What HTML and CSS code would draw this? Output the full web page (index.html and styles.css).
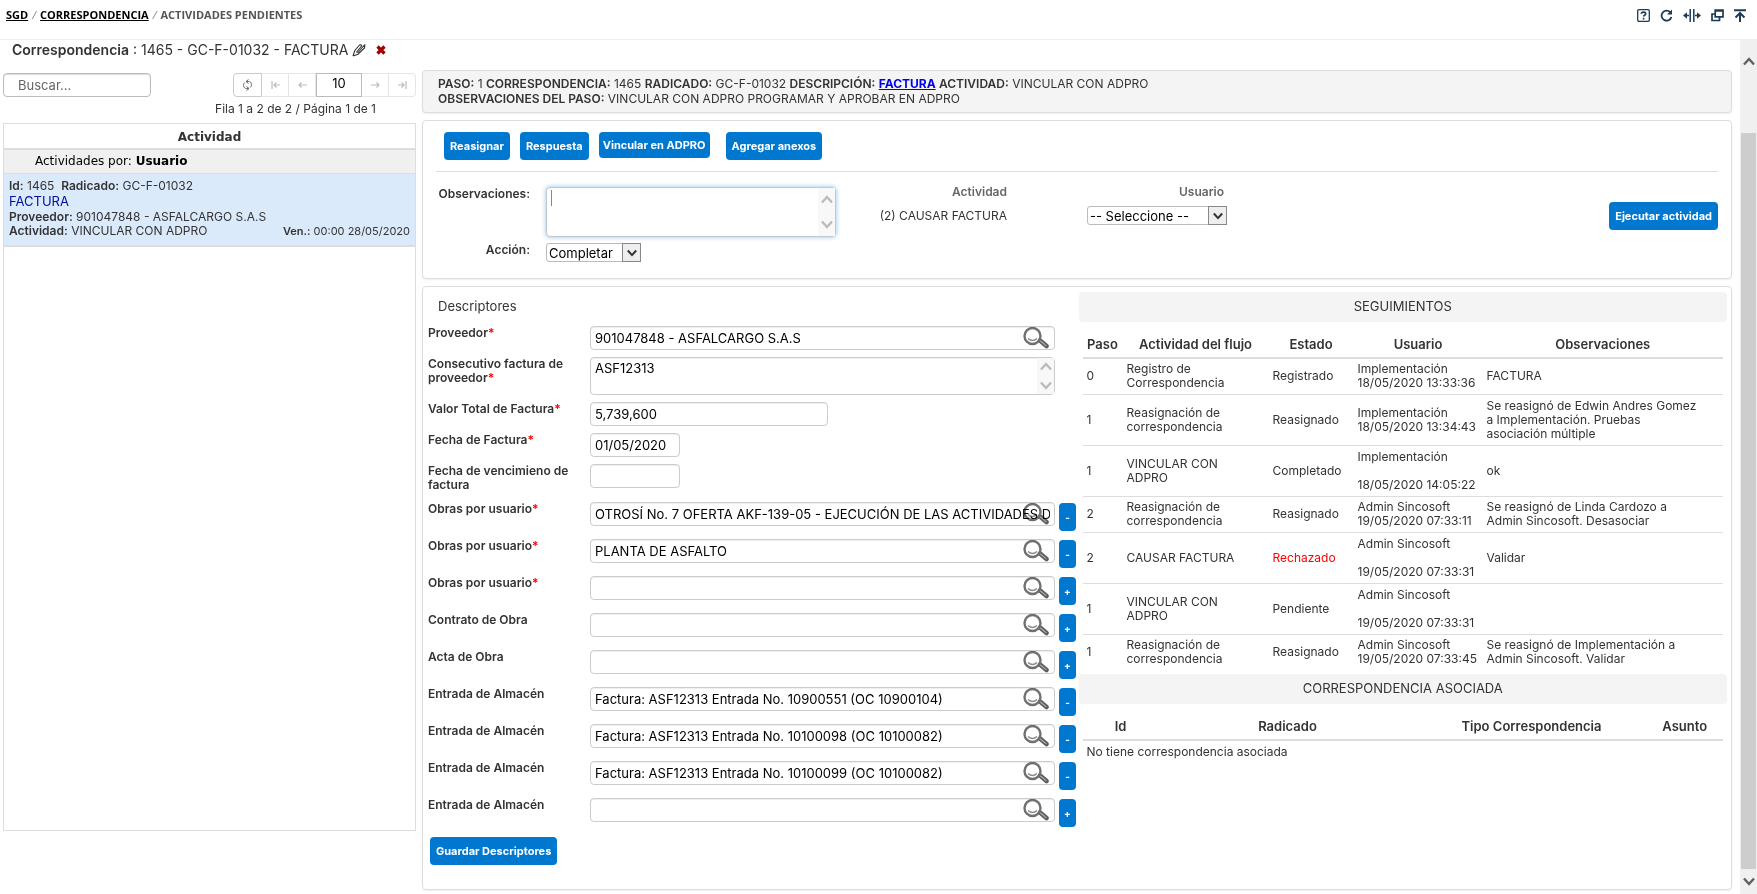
FILE: index.html
```html
<!DOCTYPE html>
<html lang="es">
<head>
<meta charset="utf-8">
<title>Actividades pendientes</title>
<link rel="stylesheet" href="styles.css">
</head>
<body>
<svg width="0" height="0" class="defs" aria-hidden="true">
  <symbol id="lens" viewBox="0 0 26 22">
    <path d="M17 13.500l6.500 5.500" stroke="#5c5c5c" stroke-width="4.500" stroke-linecap="round"/>
    <path d="M17.500 14l5.500 4.600" stroke="#b0b0b0" stroke-width="1.200" stroke-linecap="round"/>
    <circle cx="9.500" cy="9" r="8" fill="none" stroke="#707070" stroke-width="2.400"/>
    <path d="M5 11.500q4.500 4 9 0" fill="none" stroke="#8a8a8a" stroke-width="1.400"/>
  </symbol>
  <symbol id="up" viewBox="0 0 12 9"><path d="M1 7.500l5-5.500 5 5.500" fill="none" stroke="currentColor" stroke-width="2.400"/></symbol>
  <symbol id="down" viewBox="0 0 12 9"><path d="M1 1.500l5 5.500 5-5.500" fill="none" stroke="currentColor" stroke-width="2.400"/></symbol>
</svg>
<header class="topbar">
  <nav class="crumbs"><a href="#">SGD</a><i>/</i><a href="#">CORRESPONDENCIA</a><i>/</i><span>ACTIVIDADES PENDIENTES</span></nav>
  <div class="tools">
    <button aria-label="Ayuda"><svg width="13" height="13" viewBox="0 0 13 13"><rect x=".7" y=".7" width="11.600" height="11.600" rx="1.200" fill="none" stroke="currentColor" stroke-width="1.300"/><path d="M4.300 4.800c.1-2.400 4.500-2.300 4.400 0 0 1.400-2.100 1.400-2.100 2.800M6.600 8.800v1.700" fill="none" stroke="currentColor" stroke-width="1.700"/></svg></button>
    <button aria-label="Recargar"><svg width="13" height="13" viewBox="0 0 13 13"><path d="M10.200 3.200A5 5 0 1 0 11.400 8" fill="none" stroke="currentColor" stroke-width="1.800"/><path d="M12 .5v5H7z" fill="currentColor"/></svg></button>
    <button aria-label="Expandir"><svg width="18" height="13" viewBox="0 0 18 13"><path d="M7.200 0v13M10.800 0v13M2 6.500h4M12 6.500h4" stroke="currentColor" stroke-width="1.500"/><path d="M0 6.500l4-3.200v6.400zM18 6.500l-4-3.200v6.400z" fill="currentColor"/></svg></button>
    <button aria-label="Ventanas"><svg width="13" height="13" viewBox="0 0 13 13"><path d="M4.200 1.200h7.800v6.600H4.200zM4.200 2h7.800M4 5H1v6.500h7.500V8" fill="none" stroke="currentColor" stroke-width="1.700"/></svg></button>
    <button aria-label="Subir"><svg width="12" height="13" viewBox="0 0 12 13"><path d="M0 1.200h12M6 4v9M1.500 8.500L6 4l4.500 4.500" fill="none" stroke="currentColor" stroke-width="2"/></svg></button>
  </div>
</header>
<div class="viewport">
<main class="page">
  <aside class="side">
    <h1 class="title"><b>Correspondencia</b> : 1465 - GC-F-01032 - FACTURA
      <svg width="14" height="14" viewBox="0 0 14 14"><path d="M1 13l1.800-5.500L8 1.500M1 13l5-1.800L12.500 5 12.900 1.500M4.200 9.500L10 2.500M5.500 10L12.900 1.500M8 1.500l2 1" fill="none" stroke="#333" stroke-width="1.100"/></svg>
      <svg class="del" width="10" height="10" viewBox="0 0 10 10"><path d="M1.500 1.500l7 7M8.500 1.500l-7 7" stroke="#a00000" stroke-width="3.200"/></svg>
    </h1>
    <div class="finder">
      <input class="search" type="search" placeholder="Buscar..." aria-label="Buscar">
      <div class="pager">
        <button class="on" aria-label="Actualizar"><svg width="11" height="12" viewBox="0 0 11 12"><path d="M6.500.5L4 2.500l2.500 2M4 2.500h2.500c3 0 4 4 1.800 6M4.500 7.500L7 9.500l-2.500 2M7 9.500H4.500c-3 0-4-4-1.800-6" fill="none" stroke="#666" stroke-width="1"/></svg></button>
        <button aria-label="Primera"><svg width="9" height="8" viewBox="0 0 9 8"><path d="M1 0v8M9 4H3M5.500 1.500L3 4l2.500 2.500" fill="none" stroke="#bbb" stroke-width="1.200"/></svg></button>
        <button aria-label="Anterior"><svg width="9" height="8" viewBox="0 0 9 8"><path d="M9 4H1M3.500 1.500L1 4l2.500 2.500" fill="none" stroke="#bbb" stroke-width="1.200"/></svg></button>
        <input type="text" value="10" aria-label="Filas">
        <button aria-label="Siguiente"><svg width="9" height="8" viewBox="0 0 9 8"><path d="M0 4h8M5.500 1.500L8 4 5.500 6.500" fill="none" stroke="#bbb" stroke-width="1.200"/></svg></button>
        <button aria-label="Última"><svg width="9" height="8" viewBox="0 0 9 8"><path d="M8 0v8M0 4h6M3.500 1.500L6 4 3.500 6.500" fill="none" stroke="#bbb" stroke-width="1.200"/></svg></button>
      </div>
    </div>
    <p class="range">Fila 1 a 2 de 2 / Página 1 de 1</p>
    <section class="list">
      <h2>Actividad</h2>
      <p class="group">Actividades por: <b>Usuario</b></p>
      <article class="item">
        <p><b>Id:</b> 1465 &nbsp;<b>Radicado:</b> GC-F-01032</p>
        <p class="subject">FACTURA</p>
        <p><b>Proveedor:</b> 901047848 - ASFALCARGO S.A.S</p>
        <p class="split"><span><b>Actividad:</b> VINCULAR CON ADPRO</span><small><b>Ven.:</b> 00:00 28/05/2020</small></p>
      </article>
    </section>
  </aside>
  <div class="work">
    <section class="card info">
      <p><b>PASO:</b> 1 <b>CORRESPONDENCIA:</b> 1465 <b>RADICADO:</b> GC-F-01032 <b>DESCRIPCIÓN:</b> <a href="#">FACTURA</a> <b>ACTIVIDAD:</b> VINCULAR CON ADPRO</p>
      <p><b>OBSERVACIONES DEL PASO:</b> VINCULAR CON ADPRO PROGRAMAR Y APROBAR EN ADPRO</p>
    </section>
    <section class="card action">
      <div class="buttons"><button class="btn">Reasignar</button><button class="btn">Respuesta</button><button class="btn short">Vincular en ADPRO</button><button class="btn last">Agregar anexos</button></div>
      <div class="run">
        <div class="entry">
          <label for="obs">Observaciones:</label>
          <div class="area focus"><textarea id="obs"></textarea><span class="caret"></span><span class="bars"><svg width="12" height="9"><use href="#up"/></svg><svg width="12" height="9"><use href="#down"/></svg></span></div>
          <label for="acc">Acción:</label>
          <div class="pick"><select id="acc"><option>Completar</option></select><span><svg width="10" height="8"><use href="#down"/></svg></span></div>
        </div>
        <div class="next">
          <div class="what"><b>Actividad</b><p>(2) CAUSAR FACTURA</p></div>
          <div class="who"><label for="usr">Usuario</label><div class="pick wide"><select id="usr"><option>-- Seleccione --</option></select><span><svg width="10" height="8"><use href="#down"/></svg></span></div></div>
        </div>
        <button class="btn exec">Ejecutar actividad</button>
      </div>
    </section>
    <section class="card detail">
      <form class="form">
        <h3>Descriptores</h3>
        <div class="row"><label for="f1">Proveedor<em>*</em></label><div class="field"><input id="f1" type="text" value="901047848 - ASFALCARGO S.A.S"><button type="button" class="lens" aria-label="Buscar"><svg width="26" height="22"><use href="#lens"/></svg></button></div></div>
        <div class="row"><label for="f2">Consecutivo factura de proveedor<em>*</em></label><div class="field area low"><textarea id="f2">ASF12313</textarea><span class="bars"><svg width="12" height="9"><use href="#up"/></svg><svg width="12" height="9"><use href="#down"/></svg></span></div></div>
        <div class="row"><label for="f3">Valor Total de Factura<em>*</em></label><div class="field half"><input id="f3" type="text" value="5,739,600"></div></div>
        <div class="row"><label for="f4">Fecha de Factura<em>*</em></label><div class="field date"><input id="f4" type="text" value="01/05/2020"></div></div>
        <div class="row"><label for="f5">Fecha de vencimieno de factura</label><div class="field date"><input id="f5" type="text"></div></div>
        <div class="multi">
        <div class="row"><label for="m1">Obras por usuario<em>*</em></label><div class="field"><input id="m1" type="text" value="OTROSÍ No. 7 OFERTA AKF-139-05 - EJECUCIÓN DE LAS ACTIVIDADES DE DEMOLICIÓN"><button type="button" class="lens" aria-label="Buscar"><svg width="26" height="22"><use href="#lens"/></svg></button></div><button type="button" class="btn sign">-</button></div>
        <div class="row"><label for="m2">Obras por usuario<em>*</em></label><div class="field"><input id="m2" type="text" value="PLANTA DE ASFALTO"><button type="button" class="lens" aria-label="Buscar"><svg width="26" height="22"><use href="#lens"/></svg></button></div><button type="button" class="btn sign">-</button></div>
        <div class="row"><label for="m3">Obras por usuario<em>*</em></label><div class="field"><input id="m3" type="text"><button type="button" class="lens" aria-label="Buscar"><svg width="26" height="22"><use href="#lens"/></svg></button></div><button type="button" class="btn sign">+</button></div>
        <div class="row"><label for="m4">Contrato de Obra</label><div class="field"><input id="m4" type="text"><button type="button" class="lens" aria-label="Buscar"><svg width="26" height="22"><use href="#lens"/></svg></button></div><button type="button" class="btn sign">+</button></div>
        <div class="row"><label for="m5">Acta de Obra</label><div class="field"><input id="m5" type="text"><button type="button" class="lens" aria-label="Buscar"><svg width="26" height="22"><use href="#lens"/></svg></button></div><button type="button" class="btn sign">+</button></div>
        <div class="row"><label for="m6">Entrada de Almacén</label><div class="field"><input id="m6" type="text" value="Factura: ASF12313 Entrada No. 10900551 (OC 10900104)"><button type="button" class="lens" aria-label="Buscar"><svg width="26" height="22"><use href="#lens"/></svg></button></div><button type="button" class="btn sign">-</button></div>
        <div class="row"><label for="m7">Entrada de Almacén</label><div class="field"><input id="m7" type="text" value="Factura: ASF12313 Entrada No. 10100098 (OC 10100082)"><button type="button" class="lens" aria-label="Buscar"><svg width="26" height="22"><use href="#lens"/></svg></button></div><button type="button" class="btn sign">-</button></div>
        <div class="row"><label for="m8">Entrada de Almacén</label><div class="field"><input id="m8" type="text" value="Factura: ASF12313 Entrada No. 10100099 (OC 10100082)"><button type="button" class="lens" aria-label="Buscar"><svg width="26" height="22"><use href="#lens"/></svg></button></div><button type="button" class="btn sign">-</button></div>
        <div class="row"><label for="m9">Entrada de Almacén</label><div class="field"><input id="m9" type="text"><button type="button" class="lens" aria-label="Buscar"><svg width="26" height="22"><use href="#lens"/></svg></button></div><button type="button" class="btn sign">+</button></div>
        </div>
        <button type="button" class="btn save">Guardar Descriptores</button>
      </form>
      <div class="track">
        <h4>SEGUIMIENTOS</h4>
        <table class="steps">
          <colgroup><col class="c1"><col class="c2"><col class="c3"><col class="c4"><col></colgroup>
          <thead><tr><th>Paso</th><th>Actividad del flujo</th><th>Estado</th><th>Usuario</th><th>Observaciones</th></tr></thead>
          <tbody>
            <tr><td>0</td><td>Registro de<br>Correspondencia</td><td>Registrado</td><td>Implementación<br>18/05/2020 13:33:36</td><td>FACTURA</td></tr>
            <tr class="tall"><td>1</td><td>Reasignación de<br>correspondencia</td><td>Reasignado</td><td>Implementación<br>18/05/2020 13:34:43</td><td>Se reasignó de Edwin Andres Gomez<br>a Implementación. Pruebas<br>asociación múltiple</td></tr>
            <tr class="tall"><td>1</td><td>VINCULAR CON<br>ADPRO</td><td>Completado</td><td>Implementación<br><br>18/05/2020 14:05:22</td><td>ok</td></tr>
            <tr><td>2</td><td>Reasignación de<br>correspondencia</td><td>Reasignado</td><td>Admin Sincosoft<br>19/05/2020 07:33:11</td><td>Se reasignó de Linda Cardozo a<br>Admin Sincosoft. Desasociar</td></tr>
            <tr class="tall"><td>2</td><td>CAUSAR FACTURA</td><td class="bad">Rechazado</td><td>Admin Sincosoft<br><br>19/05/2020 07:33:31</td><td>Validar</td></tr>
            <tr class="tall"><td>1</td><td>VINCULAR CON<br>ADPRO</td><td>Pendiente</td><td>Admin Sincosoft<br><br>19/05/2020 07:33:31</td><td></td></tr>
            <tr><td>1</td><td>Reasignación de<br>correspondencia</td><td>Reasignado</td><td>Admin Sincosoft<br>19/05/2020 07:33:45</td><td>Se reasignó de Implementación a<br>Admin Sincosoft. Validar</td></tr>
          </tbody>
        </table>
        <h4>CORRESPONDENCIA ASOCIADA</h4>
        <table class="linked">
          <colgroup><col class="d1"><col class="d2"><col class="d3"><col></colgroup>
          <thead><tr><th>Id</th><th>Radicado</th><th>Tipo Correspondencia</th><th>Asunto</th></tr></thead>
          <tbody><tr><td colspan="4">No tiene correspondencia asociada</td></tr></tbody>
        </table>
      </div>
    </section>
  </div>
</main>
<div class="scroll" aria-hidden="true"><svg width="12" height="9"><use href="#up"/></svg><div class="thumb"></div><svg width="12" height="9"><use href="#down"/></svg></div>
</div>
</body>
</html>
```

FILE: styles.css
```css
* { box-sizing: border-box; }
body, h1, h2, h3, h4, p { margin: 0; }
body {
  display: flex;
  flex-direction: column;
  min-height: 100vh;
  background: #fff;
  color: #333;
  font: 12px/14px Inter, "Open Sans", sans-serif;
}
button, input, select, textarea { font: inherit; color: #000; margin: 0; }
button { padding: 0; border: 0; background: none; }
svg { display: block; }
.defs { position: absolute; }

.topbar {
  display: flex;
  justify-content: space-between;
  align-items: center;
  height: 40px;
  padding: 0 11px 9px 6px;
  border-bottom: 1px solid #eee;
}
.crumbs { display: flex; gap: 4px; font: 700 11px/16px "Open Sans", sans-serif; color: #555; }
.crumbs a { color: #000; }
.crumbs i { font-weight: 400; color: #888; }
.tools { display: flex; gap: 10px; align-items: center; }
.tools button { color: #1d3b57; }

.viewport { display: flex; flex: 1; }
.page { display: flex; flex: 1; gap: 6px; padding: 0 8px 4px 3px; min-width: 0; }
.scroll {
  display: flex;
  flex-direction: column;
  align-items: center;
  width: 17px;
  padding: 17px 0 8px;
  background: #f0f0f0;
  color: #606060;
}
.thumb { flex: 1; width: 15px; margin: 67px 0 8px; background: #cdcdcd; }

.side { flex: 0 0 413px; }
.title { display: flex; align-items: center; gap: 4px; height: 33px; padding: 0 0 14px 9px; font-size: 14px; font-weight: 400; white-space: nowrap; }
.title b { font-weight: 600; }
.title svg { flex: none; }
.title .del { margin-left: 6px; }
.finder { display: flex; justify-content: space-between; height: 24px; }
.search { width: 148px; padding: 0 14px; border: 1px solid #bbb; border-radius: 4px; box-shadow: inset 0 1px 1px #ddd; font-size: 13px; }
.search::placeholder { color: #666; }
.pager { display: flex; }
.pager button { display: grid; place-items: center; width: 27px; border: 1px solid #e6e6e6; border-left: 0; }
.pager .on { width: 29px; border: 1px solid #ccc; border-radius: 4px 0 0 4px; }
.pager button:last-child { border-radius: 0 4px 4px 0; }
.pager input { width: 46px; padding: 0 0 4px; border: 1px solid #bbb; text-align: center; font-size: 13px; }
.range { padding: 5px 40px 7px 0; text-align: right; }
.list { min-height: 708px; border: 1px solid #ddd; font: 12px/14px "DejaVu Sans", sans-serif; }
.list h2 { height: 26px; padding-top: 6px; border-bottom: 2px solid #ddd; text-align: center; font-size: 12px; line-height: 14px; }
.group { height: 24px; padding: 4px 0 0 31px; background: #f0f0f0; border-bottom: 1px solid #ddd; color: #000; }
.item { min-height: 73px; padding: 5px 5px 0; background: #dbeafb; border-bottom: 2px solid #ddd; font: 12px/14px Inter, sans-serif; }
.item .subject { font-size: 13px; line-height: 17px; color: #00109a; }
.item b, .info b { font-weight: 600; }
.split { display: flex; justify-content: space-between; }
.split small { font-size: 11px; }

.work { display: flex; flex: 1; flex-direction: column; gap: 7px; min-width: 0; padding-top: 30px; }
.card { border: 1px solid #ddd; border-radius: 4px; box-shadow: 0 1px 2px #eee; }
.info { padding: 5px 15px 6px; background: #f4f4f4; line-height: 15px; }
.info a { color: #00e; font-weight: 700; }
.action { padding: 11px 13px 16px; }
.buttons { display: flex; align-items: flex-start; gap: 10px; height: 40px; padding-left: 8px; border-bottom: 1px solid #ddd; }
.btn { height: 28px; padding: 0 6px; border-radius: 4px; background: #0078d0; color: #fff; font-size: 11px; font-weight: 700; line-height: 14px; white-space: nowrap; }
.btn.short { height: 26px; padding: 0 4px; }
.btn.last { margin-left: 6px; }
.run { display: flex; padding-top: 13px; }
.entry { display: grid; grid-template-columns: 94px 290px; gap: 6px 16px; padding-top: 2px; }
.entry label { text-align: right; font-weight: 600; }
.area { position: relative; height: 38px; }
.area textarea, .field input {
  display: block;
  width: 100%;
  height: 100%;
  padding: 3px 4px;
  border: 1px solid #ccc;
  border-radius: 4px;
  background: #fff;
  box-shadow: inset 0 1px 1px #eee;
  font-size: 13px;
  resize: none;
  overflow: hidden;
}
.area.focus { height: 50px; }
.focus textarea { border-color: #c3c8cc; box-shadow: 0 0 5px #8cc3ea; outline: 0; }
.caret { position: absolute; left: 5px; top: 3px; width: 1px; height: 16px; background: #888; }
.bars {
  position: absolute;
  inset: 1px 1px 1px auto;
  display: flex;
  flex-direction: column;
  justify-content: space-between;
  align-items: center;
  width: 17px;
  padding: 7px 0;
  background: #f8f8f8;
  color: #bbb;
}
.low .bars { padding: 4px 0; }
.pick { position: relative; width: 95px; height: 19px; }
.pick select { display: block; width: 100%; height: 100%; padding: 0 20px 0 2px; border: 1px solid #bbb; border-radius: 3px; background: #fff; appearance: none; font-size: 13px; line-height: 16px; }
.pick span { position: absolute; inset: 0 0 0 auto; display: grid; place-items: center; width: 19px; border: 1px solid #888; background: #eee; pointer-events: none; }
.pick.wide { width: 140px; }
.next { display: flex; gap: 80px; padding-left: 41px; flex: 1; }
.what, .who { display: flex; flex-direction: column; align-items: flex-end; }
.what { width: 130px; gap: 10px; }
.what b, .who label { font-weight: 600; color: #666; }
.what p { white-space: nowrap; }
.who { gap: 7px; }
.who label { padding-right: 3px; }
.exec { margin: 17px 0 0; }

.detail { display: flex; flex: 1; align-items: flex-start; }
.form { flex: 1 1 0; min-width: 0; padding: 12px 2px 22px 5px; }
.form h3 { padding: 0 10px 13px; font-size: 13px; line-height: 14px; font-weight: 400; }
.row { display: flex; align-items: flex-start; margin-bottom: 7px; }
.row label { flex: 0 0 162px; padding-right: 6px; font-weight: 600; line-height: 14px; }
.row em { color: red; font-style: normal; }
.field { position: relative; flex: 0 1 465px; height: 24px; }
.field.area { height: 38px; }
.field.half { flex-basis: 238px; }
.field.date { flex-basis: 90px; }
.lens { position: absolute; right: 6px; top: 1px; mix-blend-mode: multiply; }
.multi { padding-top: 3px; }
.multi .row { height: 30px; }
.multi .row:last-child { margin-bottom: 6px; }
.sign { flex: 0 0 17px; margin: 1px 0 0 4px; padding: 0; font-size: 10px; }
.save { margin: 3px 0 0 2px; }

.track { flex: 1 1 0; min-width: 0; padding: 5px 4px 0 0; }
.track h4 { height: 30px; border-radius: 4px; background: #f4f4f4; text-align: center; font-size: 13px; font-weight: 400; line-height: 29px; }
.track table { width: calc(100% - 8px); margin: 0 4px; border-collapse: collapse; table-layout: fixed; }
.track th { height: 36px; padding: 8px 0 0; border-bottom: 2px solid #ddd; font-size: 13px; font-weight: 600; white-space: nowrap; }
.track td { padding: 0 4px; white-space: nowrap; }
.steps td { height: 36px; }
.steps .tall td { height: 51px; }
.steps tr + tr td { border-top: 1px solid #ddd; }
.steps tr:last-child td { height: 40px; padding-bottom: 4px; }
.linked td { height: 22px; }
.bad { color: red; }
.c1 { width: 40px; }
.c2 { width: 146px; }
.c3 { width: 85px; }
.c4 { width: 129px; }
.d1 { width: 76px; }
.d2 { width: 258px; }
.d3 { width: 230px; }
```
